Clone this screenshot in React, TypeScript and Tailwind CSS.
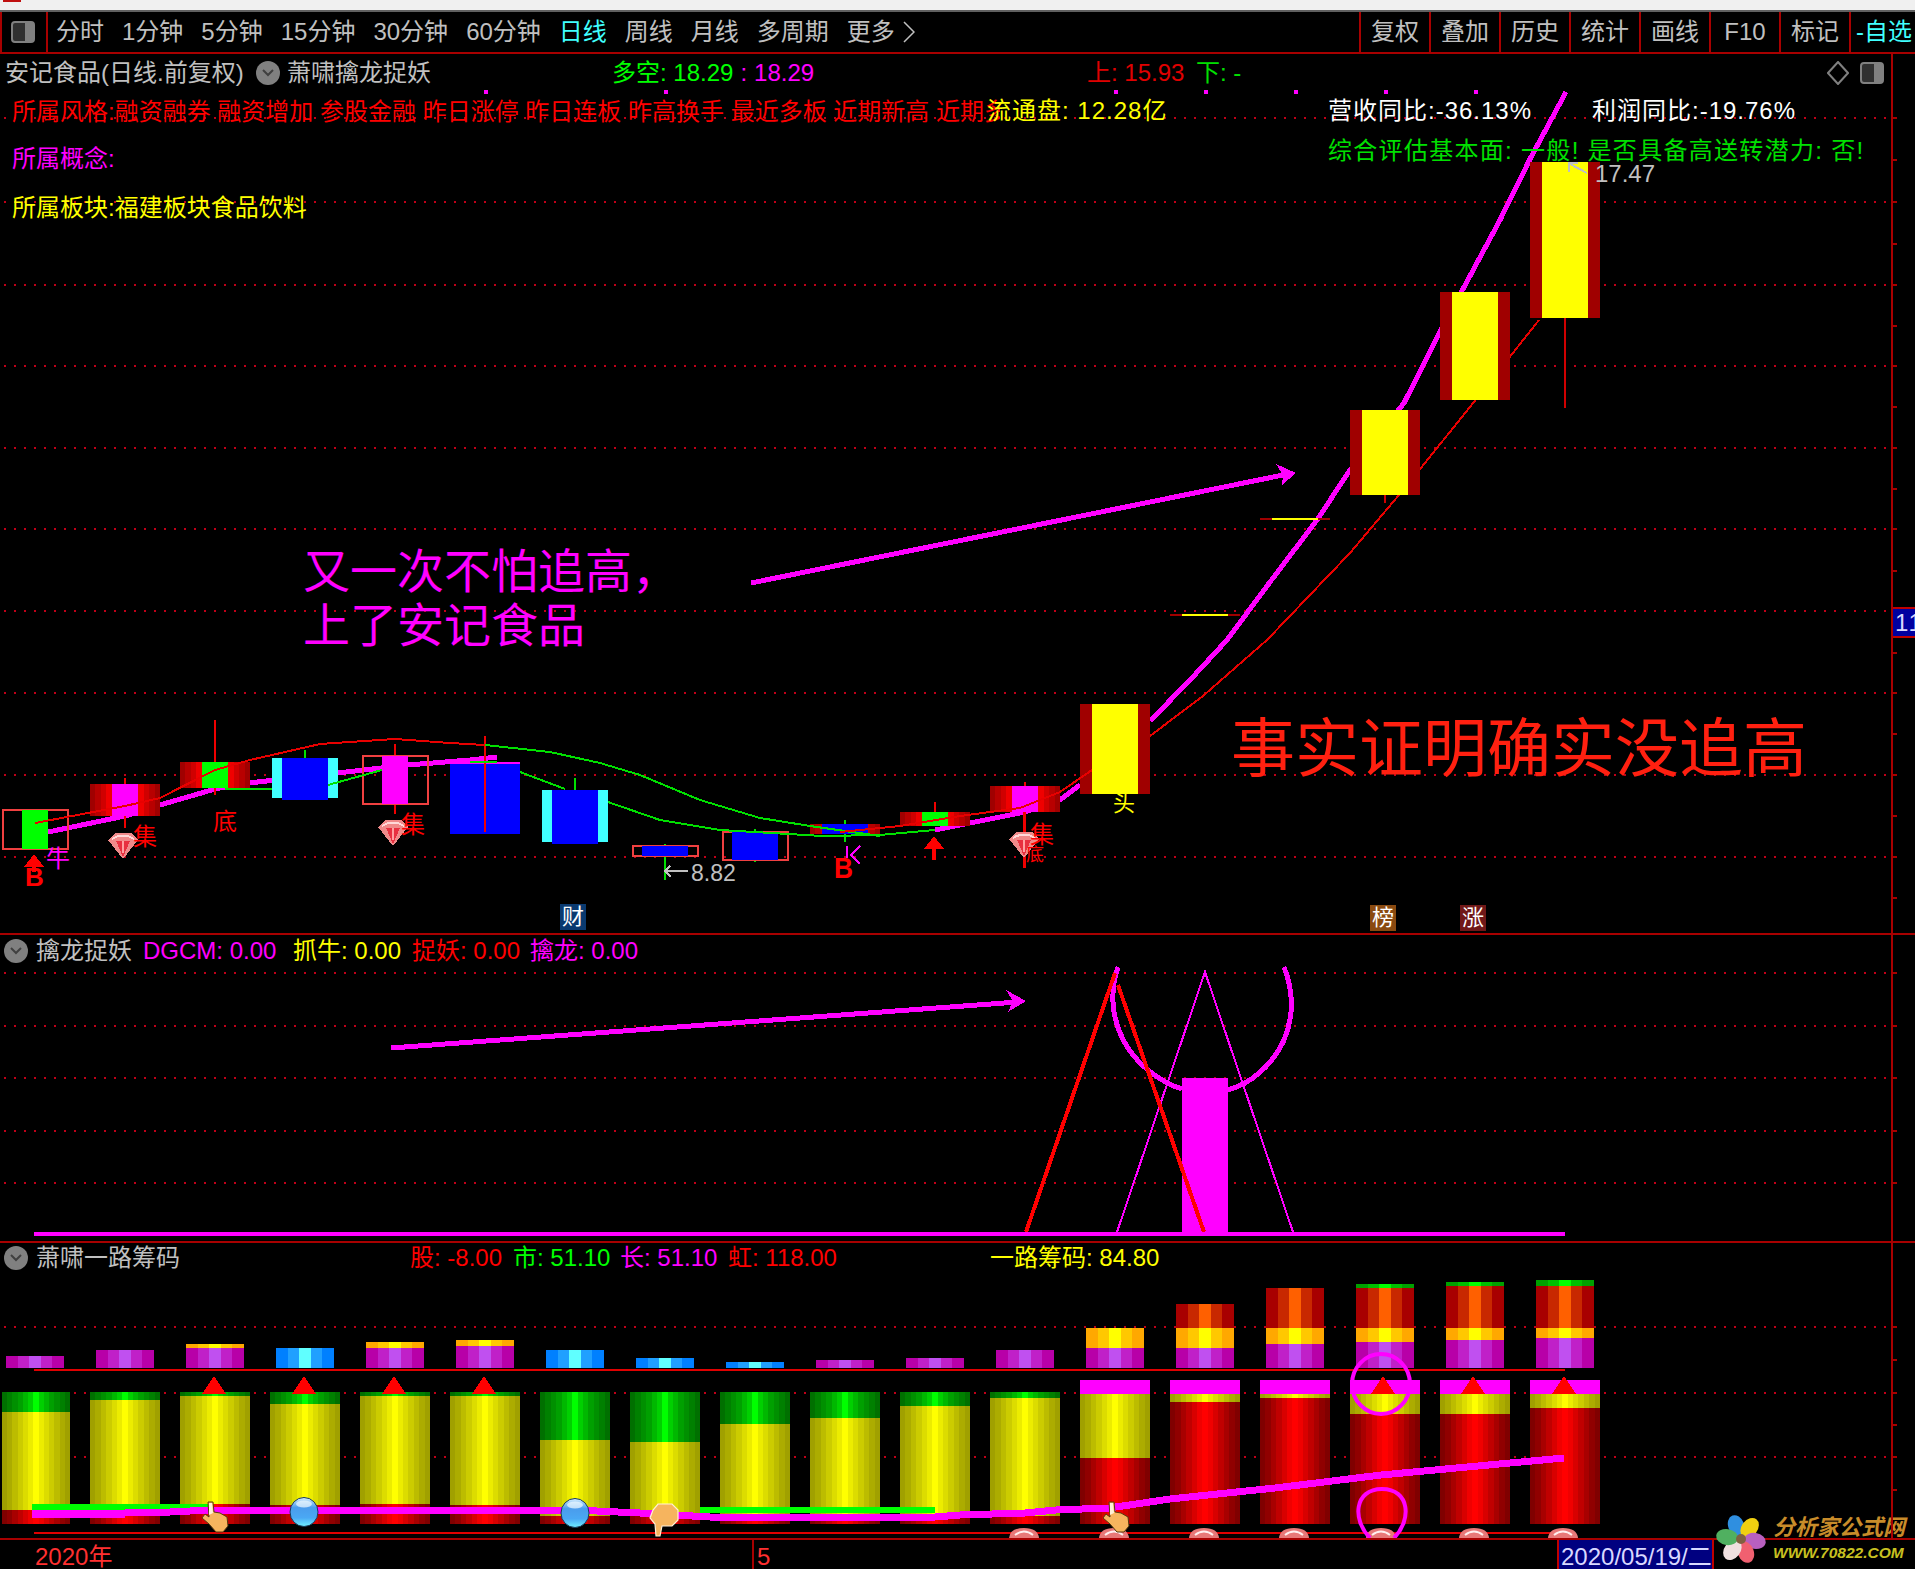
import React from "react";

const FONT = "font-['Liberation_Sans','Noto_Sans_CJK_SC',sans-serif]";
const AXIS_RED = "#a80000";
const DOT_RED = "#c00018";
const MAGENTA = "#ff00ff";

const mirror = (c: string[]) => [...c, ...c.slice(0, -1).reverse()];

const GRADIENTS: Record<string, string[]> = {
  candleRed: mirror(["#a00000", "#b80000", "#d00000", "#f00000", "#ff0000", "#ff0000", "#ff0000"]),
  yellow: mirror(["#a0a000", "#acac00", "#bcbc00", "#cccc00", "#dcdc00", "#ecec00", "#ffff00"]),
  green: mirror(["#007000", "#008000", "#009000", "#00a000", "#00b800", "#00d000", "#00ff00"]),
  red: mirror(["#800000", "#900000", "#a80000", "#c00000", "#d80000", "#f00000", "#ff0000"]),
  purple: mirror(["#b800a8", "#c020c8", "#c050f0"]),
  blue: mirror(["#0080ff", "#20a0ff", "#60ffff"]),
  orange: mirror(["#ffa800", "#ffc800", "#ffff00"]),
  ember: mirror(["#a80000", "#c82800", "#ff6000"]),
  capGreen: mirror(["#00a000", "#00c000", "#00ff00"]),
};

function Defs() {
  return (
    <defs>
      {Object.entries(GRADIENTS).map(([id, cols]) => (
        <linearGradient key={id} id={id} x1="0" x2="1" y1="0" y2="0">
          {cols.flatMap((c, i) => [
            <stop key={i + "a"} offset={i / cols.length} stopColor={c} />,
            <stop key={i + "b"} offset={(i + 1) / cols.length} stopColor={c} />,
          ])}
        </linearGradient>
      ))}
      <linearGradient id="ball" x1="0" x2="0" y1="0" y2="1">
        <stop offset="0" stopColor="#d8f0ff" />
        <stop offset="0.35" stopColor="#4a9cec" />
        <stop offset="0.7" stopColor="#4aa8f4" />
        <stop offset="1" stopColor="#70f0ff" />
      </linearGradient>
    </defs>
  );
}

function Grid({ ys }: { ys: number[] }) {
  return (
    <g>
      {ys.map((y) => (
        <line key={y} x1="4" x2="1890" y1={y} y2={y} stroke={DOT_RED} strokeWidth="2" strokeDasharray="2 8" />
      ))}
    </g>
  );
}

function AxisTicks({ ys }: { ys: number[] }) {
  return (
    <g>
      {ys.map((y) => (
        <line key={y} x1="1891" x2="1897" y1={y} y2={y} stroke={AXIS_RED} strokeWidth="2" />
      ))}
    </g>
  );
}

function Gem({ cx, y }: { cx: number; y: number }) {
  return (
    <g>
      <polygon points={`${cx - 15},${y + 7} ${cx - 8},${y} ${cx + 8},${y} ${cx + 15},${y + 7} ${cx},${y + 26}`} fill="#f08a8a" />
      <path d={`M${cx - 11} ${y + 6} Q${cx} ${y - 1} ${cx + 11} ${y + 6}`} fill="none" stroke="#ffd8d8" strokeWidth="2" />
      <polygon points={`${cx - 7},${y + 8} ${cx + 7},${y + 8} ${cx},${y + 24}`} fill="#e83040" />
      <line x1={cx} x2={cx} y1={y + 8} y2={y + 20} stroke="#ffa0a0" strokeWidth="2" />
    </g>
  );
}

function UpArrow({ x, top, bottom }: { x: number; top: number; bottom: number }) {
  return (
    <g fill="#ff0000">
      <polygon points={`${x},${top} ${x + 10},${top + 13} ${x - 10},${top + 13}`} />
      <rect x={x - 2} y={top + 12} width="4" height={bottom - top - 12} />
    </g>
  );
}

function Hand({ x, y }: { x: number; y: number }) {
  return (
    <g transform={`translate(${x} ${y})`} shapeRendering="auto">
      <path
        d="M0 0 L5 0 L6 10 L12 11 L19 15 L20 24 L15 30 L8 30 L1 22 L-6 16 L-3 12 L1 15 Z"
        fill="#f6b45e"
        stroke="#54380f"
        strokeWidth="1"
      />
      <path d="M1 1 L4 1 L5 11 L1 13 Z" fill="#fff0d8" />
    </g>
  );
}

function Fist({ x, y }: { x: number; y: number }) {
  return (
    <g transform={`translate(${x} ${y})`} shapeRendering="auto">
      <path
        d="M8 0 L22 0 L28 6 L28 16 L22 22 L12 22 L10 32 L6 32 L5 20 L0 14 L3 6 Z"
        fill="#f6b45e"
        stroke="#fff0d8"
        strokeWidth="1.2"
      />
    </g>
  );
}

function Ball({ cx, cy }: { cx: number; cy: number }) {
  return (
    <g shapeRendering="auto">
      <ellipse cx={cx} cy={cy} rx="14" ry="14.5" fill="url(#ball)" stroke="#183858" strokeWidth="1" />
      <ellipse cx={cx} cy={cy - 8} rx="8" ry="3.5" fill="#f0faff" opacity="0.7" />
    </g>
  );
}

function PinkCap({ cx }: { cx: number }) {
  return (
    <g shapeRendering="auto">
      <path d={`M${cx - 15} 1538 Q${cx - 14} 1528 ${cx} 1528 Q${cx + 14} 1528 ${cx + 15} 1538 Z`} fill="#e87878" />
      <path d={`M${cx - 9} 1535 Q${cx} 1528 ${cx + 9} 1535`} fill="none" stroke="#fff0f0" strokeWidth="2" />
    </g>
  );
}

type Candle = { x: number; top: number; bottom: number; wick?: [number, number, string]; side?: string; core: string; outline?: boolean };

const CANDLES: Candle[] = [
  { x: 0, top: 810, bottom: 849, core: "#00ff00", outline: true },
  { x: 90, top: 784, bottom: 816, core: MAGENTA, side: "url(#candleRed)", wick: [778, 828, "#f00000"] },
  { x: 180, top: 762, bottom: 788, core: "#00ff00", side: "url(#candleRed)", wick: [720, 795, "#f00000"] },
  { x: 270, top: 758, bottom: 800, core: "#0000ff", side: "#40ffff", wick: [750, 758, "#00e000"] },
  { x: 360, top: 756, bottom: 804, core: MAGENTA, outline: true, wick: [744, 814, "#f00000"] },
  { x: 630, top: 846, bottom: 856, core: "#0000ff", outline: true, wick: [844, 880, "#00e000"] },
  { x: 720, top: 832, bottom: 860, core: "#0000ff", outline: true, wick: [829, 862, "#00e000"] },
  { x: 810, top: 824, bottom: 834, core: "#0000ff", side: "url(#candleRed)", wick: [820, 842, "#00e000"] },
  { x: 900, top: 812, bottom: 826, core: "#00ff00", side: "url(#candleRed)", wick: [802, 812, "#f00000"] },
  { x: 990, top: 786, bottom: 812, core: MAGENTA, side: "url(#candleRed)", wick: [782, 825, "#f00000"] },
  { x: 1080, top: 704, bottom: 794, core: "#ffff00", side: "#a00000" },
  { x: 1350, top: 410, bottom: 495, core: "#ffff00", side: "#a00000", wick: [495, 503, "#d00000"] },
  { x: 1440, top: 292, bottom: 400, core: "#ffff00", side: "#a00000" },
  { x: 1530, top: 162, bottom: 318, core: "#ffff00", side: "#a00000", wick: [318, 408, "#d00000"] },
];

function CandleMark({ c }: { c: Candle }) {
  const center = c.x + 35;
  const blueBody = c.core === "#0000ff";
  const yellowBody = c.core === "#ffff00";
  const halfWidth = blueBody || yellowBody ? 23 : 13;
  const cyanSide = c.side === "#40ffff";
  return (
    <g>
      {c.wick && <line x1={center} x2={center} y1={c.wick[0]} y2={c.wick[1]} stroke={c.wick[2]} strokeWidth="2" />}
      {c.side && <rect x={c.x + (cyanSide ? 2 : 0)} y={c.top} width={cyanSide ? 66 : 70} height={cyanSide ? c.bottom - c.top - 2 : c.bottom - c.top} fill={c.side} />}
      {c.outline && <rect x={c.x + 3} y={c.top} width="65" height={c.bottom - c.top} fill="none" stroke="#f04040" strokeWidth="2" />}
      <rect x={center - halfWidth} y={c.top} width={halfWidth * 2} height={c.bottom - c.top} fill={c.core} />
    </g>
  );
}

function MainChart() {
  return (
    <svg className="absolute inset-0 w-full h-full" viewBox="0 54 1915 879" shapeRendering="crispEdges">
      <Defs />
      <Grid ys={[118, 202, 285, 366, 448, 529, 611, 693, 775, 857]} />
      <AxisTicks ys={[118, 160, 202, 244, 285, 326, 366, 407, 448, 489, 529, 571, 653, 693, 734, 775, 816, 857, 898]} />
      {[484, 664, 1114, 1204, 1294, 1384, 1474].map((x) => (
        <rect key={x} x={x} y="90" width="4" height="4" fill={MAGENTA} />
      ))}

      {/* thick trend line sits behind the candles */}
      <polyline
        points="48,832 125,816 160,805 215,789 240,784 408,765 470,760 497,757"
        fill="none"
        stroke={MAGENTA}
        strokeWidth="5"
      />
      <polyline points="935,830 1025,812 1060,800 1080,785" fill="none" stroke={MAGENTA} strokeWidth="5" />
      <polyline
        points="1150,721 1190,680 1227,640 1270,582 1317,520 1350,470 1404,403 1441,330 1500,220 1530,159 1566,92"
        fill="none"
        stroke={MAGENTA}
        strokeWidth="5"
      />
      <polyline points="1138,745 1203,696 1267,640 1350,553 1404,489 1478,397 1539,320" fill="none" stroke="#e80000" strokeWidth="2" />

      <rect x="450" y="762" width="70" height="2" fill={MAGENTA} />
      <rect x="450" y="764" width="70" height="70" fill="#0000ff" />
      <rect x="542" y="790" width="66" height="52" fill="#40ffff" />
      <rect x="552" y="790" width="46" height="54" fill="#0000ff" />
      <line x1="575" x2="575" y1="778" y2="790" stroke="#00e000" strokeWidth="2" />
      {CANDLES.map((c) => (
        <CandleMark key={c.x} c={c} />
      ))}
      <line x1="485" x2="485" y1="736" y2="832" stroke="#f00000" strokeWidth="2" />

      {/* thin averages over the low candles */}
      <polyline
        points="35,823 125,806 160,798 215,770 250,760 320,744 395,739 450,743 485,745"
        fill="none"
        stroke="#e80000"
        strokeWidth="2"
      />
      <polyline
        points="485,745 550,752 600,763 640,775 700,800 760,818 810,826 880,836"
        fill="none"
        stroke="#00e000"
        strokeWidth="2"
      />
      <polyline points="225,789 272,789" fill="none" stroke="#00e000" strokeWidth="2" />
      <polyline points="328,785 382,770" fill="none" stroke="#00e000" strokeWidth="2" />
      <polyline points="470,762 497,762" fill="none" stroke="#00e000" strokeWidth="2" />
      <polyline points="520,772 565,789" fill="none" stroke="#00e000" strokeWidth="2" />
      <polyline
        points="608,802 660,820 720,830 788,834 822,836 880,835 935,830"
        fill="none"
        stroke="#00e000"
        strokeWidth="2"
      />
      <polyline points="840,832 900,826 960,816 1020,808 1060,792 1092,770" fill="none" stroke="#e80000" strokeWidth="2" />

      {/* limit-up days */}
      <rect x="1170" y="614" width="70" height="2" fill="#a00000" />
      <rect x="1182" y="614" width="46" height="2" fill="#ffff00" />
      <rect x="1260" y="518" width="70" height="2" fill="#a00000" />
      <rect x="1272" y="518" width="46" height="2" fill="#ffff00" />

      {/* hand-drawn arrow */}
      <line x1="751" y1="583" x2="1288" y2="474" stroke={MAGENTA} strokeWidth="5" />
      <polygon points="1296,473 1276,464 1283,475 1282,485" fill={MAGENTA} />

      {/* markers */}
      <Gem cx={123} y={833} />
      <Gem cx={393} y={820} />
      <line x1="1024" x2="1024" y1="812" y2="868" stroke="#f00000" strokeWidth="3" />
      <Gem cx={1024} y={832} />
      <UpArrow x={34} top={854} bottom={872} />
      <UpArrow x={934} top={836} bottom={860} />
      <g fill="#ff0000" fontSize="24">
        <text x="133" y="845">集</text>
        <text x="213" y="830">底</text>
        <text x="401" y="833">集</text>
        <text x="1030" y="843">集</text>
        <text x="1026" y="861" fontSize="18">底</text>
        <text x="25" y="886" fontSize="26" fontWeight="700">B</text>
        <text x="834" y="878" fontSize="30" fontWeight="700" textLength="19" lengthAdjust="spacingAndGlyphs">B</text>
      </g>
      <text x="46" y="867" fontSize="24" fill={MAGENTA}>牛</text>
      <polyline points="860,846 851,855 860,864" fill="none" stroke={MAGENTA} strokeWidth="2" />
      <line x1="847" x2="847" y1="846" y2="858" stroke={MAGENTA} strokeWidth="2" />
      <text x="1113" y="811" fontSize="22" fill="#ffff00">头</text>

      {/* extreme price labels */}
      <g stroke="#c0c0c0" strokeWidth="2" fill="none">
        <polyline points="688,871 665,871" />
        <polyline points="670,866 665,871 671,877" />
        <polyline points="1587,173 1570,164" />
        <polyline points="1569,172 1569,163 1578,163" />
      </g>
      <text x="691" y="881" fontSize="23" fill="#c0c0c0">8.82</text>
      <text x="1595" y="182" fontSize="24" fill="#c0c0c0">17.47</text>
    </svg>
  );
}

function DragonChart() {
  return (
    <svg className="absolute inset-0 w-full h-full" viewBox="0 935 1915 306" shapeRendering="crispEdges">
      <Grid ys={[973, 1026, 1078, 1131, 1183]} />
      <AxisTicks ys={[973, 1026, 1078, 1131, 1183]} />
      <line x1="391" y1="1048" x2="1018" y2="1002" stroke={MAGENTA} strokeWidth="5" />
      <polygon points="1026,1001 1006,990 1013,1001 1008,1012" fill={MAGENTA} />
      <polyline points="1117,1232 1205,972 1293,1232" fill="none" stroke={MAGENTA} strokeWidth="2" />
      <rect x="1182" y="1078" width="46" height="154" fill={MAGENTA} />
      <path
        d="M1118 967 C1110 990 1110 1020 1128 1048 C1140 1066 1160 1082 1182 1089 M1228 1090 C1250 1084 1272 1066 1284 1040 C1294 1016 1293 990 1284 967"
        fill="none"
        stroke={MAGENTA}
        strokeWidth="5"
      />
      <polyline points="1026,1232 1115,973" fill="none" stroke="#ff0000" strokeWidth="4" />
      <polyline points="1118,985 1204,1232" fill="none" stroke="#ff0000" strokeWidth="4" />
      <rect x="34" y="1232" width="1531" height="4" fill={MAGENTA} />
    </svg>
  );
}

type Stack = { kind: "purple" | "blue"; top: number; orange?: number; ember?: number; green?: number };

const STACKS: Stack[] = [
  { kind: "purple", top: 1356 },
  { kind: "purple", top: 1350 },
  { kind: "purple", top: 1348, orange: 1344 },
  { kind: "blue", top: 1348 },
  { kind: "purple", top: 1348, orange: 1342 },
  { kind: "purple", top: 1346, orange: 1340 },
  { kind: "blue", top: 1350 },
  { kind: "blue", top: 1358 },
  { kind: "blue", top: 1362 },
  { kind: "purple", top: 1360 },
  { kind: "purple", top: 1358 },
  { kind: "purple", top: 1350 },
  { kind: "purple", top: 1348, orange: 1328 },
  { kind: "purple", top: 1348, orange: 1328, ember: 1304 },
  { kind: "purple", top: 1344, orange: 1328, ember: 1288 },
  { kind: "purple", top: 1342, orange: 1328, ember: 1288, green: 1284 },
  { kind: "purple", top: 1340, orange: 1328, ember: 1286, green: 1282 },
  { kind: "purple", top: 1338, orange: 1328, ember: 1286, green: 1280 },
];

// [top of the yellow, top of the red]
const COLUMNS: [number, number][] = [
  [1412, 1510], [1400, 1510], [1396, 1504], [1404, 1505], [1396, 1504], [1396, 1505],
  [1440, 1516], [1442, 1516], [1424, 1516], [1418, 1516], [1406, 1516], [1398, 1516],
  [1394, 1458], [1394, 1402], [1394, 1398], [1394, 1414], [1394, 1414], [1394, 1408],
];

function ChipChart() {
  return (
    <svg className="absolute inset-0 w-full h-full" viewBox="0 1243 1915 295" shapeRendering="crispEdges">
      <Grid ys={[1327, 1393, 1457]} />
      <AxisTicks ys={[1327, 1360, 1393, 1425, 1457, 1490]} />

      {STACKS.map((s, i) => {
        const x = 6 + 90 * i;
        return (
          <g key={i}>
            <rect x={x} y={s.top} width="58" height={1368 - s.top} fill={`url(#${s.kind})`} />
            {s.orange && <rect x={x} y={s.orange} width="58" height={s.top - s.orange} fill="url(#orange)" />}
            {s.ember && s.orange && <rect x={x} y={s.ember} width="58" height={s.orange - s.ember} fill="url(#ember)" />}
            {s.green && s.ember && <rect x={x} y={s.green} width="58" height={s.ember - s.green} fill="url(#capGreen)" />}
          </g>
        );
      })}
      <rect x="34" y="1369" width="1531" height="2" fill="#e00000" />

      {COLUMNS.map(([yellow, red], i) => {
        const x = i === 0 ? 2 : 90 * i;
        const w = i === 0 ? 68 : 70;
        return (
          <g key={i}>
            {i < 12 ? (
              <rect x={x} y="1392" width={w} height={yellow - 1392} fill="url(#green)" />
            ) : (
              <rect x={x} y="1380" width={w} height="14" fill={MAGENTA} />
            )}
            <rect x={x} y={yellow} width={w} height={red - yellow} fill="url(#yellow)" />
            <rect x={x} y={red} width={w} height={1524 - red} fill="url(#red)" />
          </g>
        );
      })}

      {[214, 304, 394, 484, 1383, 1473, 1564].map((x) => (
        <polygon key={x} points={`${x},1376 ${x + 12},1394 ${x - 12},1394`} fill="#ff0000" />
      ))}

      {/* bottom trend lines */}
      <polyline points="32,1507 125,1507 170,1507 210,1507" fill="none" stroke="#00ff00" strokeWidth="6" />
      <polyline points="700,1510 935,1510" fill="none" stroke="#00ff00" strokeWidth="6" />
      <rect x="1068" y="1506" width="16" height="2" fill="#00ff00" />
      <polyline points="32,1514 125,1514" fill="none" stroke={MAGENTA} strokeWidth="8" />
      <polyline points="125,1512 170,1512 210,1510 575,1510 640,1513 710,1517 935,1517 960,1515 1025,1513 1056,1510 1109,1508 1170,1499 1275,1488 1381,1475 1564,1458" fill="none" stroke={MAGENTA} strokeWidth="7" />

      <rect x="34" y="1532" width="1531" height="2" fill="#e00000" />
      {[1024, 1114, 1204, 1294, 1381, 1474, 1563].map((x) => (
        <PinkCap key={x} cx={x} />
      ))}

      <Hand x={208} y={1502} />
      <Hand x={1109} y={1502} />
      <Fist x={650} y={1504} />
      <Ball cx={304} cy={1512} />
      <Ball cx={575} cy={1513} />

      <g shapeRendering="auto" fill="none" stroke={MAGENTA} strokeWidth="4">
        <ellipse cx="1381" cy="1384" rx="29" ry="30" />
        <path d="M1370 1538 C1352 1520 1354 1489 1382 1489 C1410 1489 1412 1520 1394 1538" />
      </g>
    </svg>
  );
}

function FoldBadge() {
  return (
    <div className="w-6 h-6 rounded-full bg-[#808080] flex items-center justify-center">
      <svg width="12" height="8" viewBox="0 0 12 8">
        <polyline points="1,1 6,6 11,1" fill="none" stroke="#404040" strokeWidth="2" />
      </svg>
    </div>
  );
}

function PaneToggle() {
  return (
    <div className="w-[24px] h-[22px] rounded-[4px] border-2 border-[#808080] bg-[#303030] flex justify-end">
      <div className="w-[8px] h-full bg-[#808080]" />
    </div>
  );
}

function Toolbar() {
  const left: [string, string][] = [
    ["分时", "text-[#c0c0c0]"],
    ["1分钟", "text-[#c0c0c0]"],
    ["5分钟", "text-[#c0c0c0]"],
    ["15分钟", "text-[#c0c0c0]"],
    ["30分钟", "text-[#c0c0c0]"],
    ["60分钟", "text-[#c0c0c0]"],
    ["日线", "text-[#40ffff]"],
    ["周线", "text-[#c0c0c0]"],
    ["月线", "text-[#c0c0c0]"],
    ["多周期", "text-[#c0c0c0]"],
  ];
  const right = ["复权", "叠加", "历史", "统计", "画线", "F10", "标记"];
  return (
    <div className="h-[42px] shrink-0 flex border-b-2 border-[#a80000] text-[24px] leading-none">
      <div className="w-[48px] shrink-0 flex items-center justify-center border-x-2 border-[#a80000] pr-[2px]">
        <PaneToggle />
      </div>
      <div className="flex items-center gap-[18px] pl-[8px]">
        {left.map(([label, color]) => (
          <span key={label} className={color}>{label}</span>
        ))}
        <span className="flex items-center gap-[8px] text-[#c0c0c0]">
          更多
          <svg width="12" height="22" viewBox="0 0 12 22">
            <polyline points="1,1 11,11 1,21" fill="none" stroke="#c0c0c0" strokeWidth="1.5" />
          </svg>
        </span>
      </div>
      <div className="ml-auto flex">
        {right.map((label) => (
          <div key={label} className="w-[70px] flex items-center justify-center border-l-2 border-[#a80000] text-[#c0c0c0]">
            {label}
          </div>
        ))}
        <div className="w-[66px] flex items-center border-l-2 border-[#a80000] text-[#40ffff] whitespace-nowrap overflow-hidden pl-[5px]">
          -自选
        </div>
      </div>
    </div>
  );
}

function MainPanel() {
  return (
    <div className="relative h-[879px] shrink-0 text-[24px] leading-none whitespace-nowrap">
      <MainChart />
      <div className="relative">
        <div className="flex items-center h-[37px]">
          <span className="w-[256px] shrink-0 pl-[5px] text-[#c0c0c0]">安记食品(日线.前复权)</span>
          <div className="w-[31px] shrink-0"><FoldBadge /></div>
          <span className="w-[325px] shrink-0 text-[#c0c0c0]">萧啸擒龙捉妖</span>
          <span className="w-[475px] shrink-0">
            <span className="text-[#00ff00]">多空: 18.29</span>
            <span className="text-[#ff00ff] ml-[7px]">:</span>
            <span className="text-[#ff00ff] ml-[7px]">18.29</span>
          </span>
          <span className="w-[109px] shrink-0 text-[#e00000]">上: 15.93</span>
          <span className="w-[631px] shrink-0 text-[#00e000]">下: -</span>
          <svg className="w-[22px] shrink-0" width="22" height="24" viewBox="0 0 22 24">
            <polygon points="11,1 21,12 11,23 1,12" fill="none" stroke="#808080" strokeWidth="2" />
          </svg>
          <div className="ml-[11px]"><PaneToggle /></div>
        </div>
        <div className="flex">
          <div className="w-[1000px] shrink-0 overflow-hidden pl-[12px] flex flex-col">
            <span className="h-[37px] flex items-center text-[#ff0000] mt-[2px]">
              所属风格:融资融券 融资增加 参股金融 昨日涨停 昨日连板 昨高换手 最近多板 近期新高 近期多板
            </span>
            <span className="h-[24px] mt-[17px] flex items-center text-[#ff00ff]">所属概念:</span>
            <span className="h-[24px] mt-[25px] flex items-center text-[#ffff00]">所属板块:福建板块食品饮料</span>
          </div>
          <span className="w-[341px] shrink-0 -ml-[13px] h-[37px] mt-[1px] flex items-center text-[#ffff00] tracking-[1px]">流通盘: 12.28亿</span>
          <div className="flex flex-col">
            <div className="flex h-[37px] items-center mt-[1px] text-[#ffffff] tracking-[1px]">
              <span className="w-[264px] shrink-0">营收同比:-36.13%</span>
              <span>利润同比:-19.76%</span>
            </div>
            <span className="h-[24px] mt-[10px] flex items-center text-[#00e000] tracking-[1.3px]">综合评估基本面: 一般! 是否具备高送转潜力: 否!</span>
          </div>
        </div>
      </div>
      <div className="absolute right-0 top-[553px] w-[24px] h-[31px] border-y-2 border-[#c00000] bg-[#0000a0] text-[#d8d8ff] flex items-center pl-[4px] overflow-hidden tracking-[2px]">
        11
      </div>
      <div className="absolute left-[560px] top-[850px] w-[26px] h-[26px] bg-[#0a3a70] text-white text-[22px] flex items-center justify-center">财</div>
      <div className="absolute left-[1370px] top-[851px] w-[26px] h-[26px] bg-[#8a4a10] text-white text-[22px] flex items-center justify-center">榜</div>
      <div className="absolute left-[1460px] top-[851px] w-[26px] h-[26px] bg-[#701818] text-white text-[22px] flex items-center justify-center">涨</div>
      <div className="absolute left-[303px] top-[491px] text-[47px] leading-[54px] text-[#ff00ff]">
        <div>又一次不怕追高，</div>
        <div>上了安记食品</div>
      </div>
      <div className="absolute left-[1231px] top-[663px] text-[64px] leading-none text-[#ff2010]">事实证明确实没追高</div>
    </div>
  );
}

function DragonPanel() {
  return (
    <div className="relative h-[308px] shrink-0 border-t-2 border-[#a80000] text-[24px] leading-none whitespace-nowrap">
      <DragonChart />
      <div className="relative flex items-center h-[32px]">
        <div className="w-[36px] shrink-0 pl-[4px]"><FoldBadge /></div>
        <span className="w-[107px] shrink-0 text-[#c0c0c0]">擒龙捉妖</span>
        <span className="w-[150px] shrink-0 text-[#ff00ff]">DGCM: 0.00</span>
        <span className="w-[119px] shrink-0 text-[#ffff00]">抓牛: 0.00</span>
        <span className="w-[118px] shrink-0 text-[#ff0000]">捉妖: 0.00</span>
        <span className="text-[#ff00ff]">擒龙: 0.00</span>
      </div>
    </div>
  );
}

function ChipPanel() {
  return (
    <div className="relative h-[297px] shrink-0 border-t-2 border-[#a80000] text-[24px] leading-none whitespace-nowrap">
      <ChipChart />
      <div className="relative flex items-center h-[30px]">
        <div className="w-[36px] shrink-0 pl-[4px]"><FoldBadge /></div>
        <span className="w-[374px] shrink-0 text-[#c0c0c0]">萧啸一路筹码</span>
        <span className="w-[103px] shrink-0 text-[#ff0000]">股: -8.00</span>
        <span className="w-[107px] shrink-0 text-[#00ff00]">市: 51.10</span>
        <span className="w-[108px] shrink-0 text-[#ff00ff]">长: 51.10</span>
        <span className="w-[262px] shrink-0 text-[#ff0000]">虹: 118.00</span>
        <span className="text-[#ffff00]">一路筹码: 84.80</span>
      </div>
    </div>
  );
}

function Logo() {
  const petals = [
    ["#2f8fe0", 0],
    ["#f0d010", 58],
    ["#b860c0", 118],
    ["#f06070", 180],
    ["#f0e0e0", 238],
    ["#50b060", 298],
  ] as const;
  return (
    <div className="absolute right-[10px] bottom-[5px] flex items-center gap-[6px]">
      <svg width="52" height="50" viewBox="-26 -25 52 50">
        {petals.map(([c, a]) => (
          <ellipse key={a} cx="0" cy="-14" rx="8" ry="11" fill={c} transform={`rotate(${a - 20})`} />
        ))}
        <circle r="5" fill="#806040" />
      </svg>
      <div className="w-[132px] flex flex-col items-start gap-[6px]">
        <span className="text-[22px] leading-none font-bold italic text-[#c88c2a]">分析家公式网</span>
        <span className="text-[15.5px] leading-none font-bold italic text-[#c8c020]">WWW.70822.COM</span>
      </div>
    </div>
  );
}

function TimeAxis() {
  return (
    <div className="relative flex-1 border-t-2 border-[#a80000] flex text-[24px] leading-none text-[#ff3030] whitespace-nowrap">
      <span className="w-[752px] shrink-0 pl-[35px] pt-[5px]">2020年</span>
      <span className="w-[805px] shrink-0 border-l-2 border-[#a80000] pl-[3px] pt-[5px]">5</span>
      <span className="w-[157px] shrink-0 bg-[#000080] border-x-2 border-[#c00000] text-[#d8d8ff] pl-[2px] pt-[5px]">2020/05/19/二</span>
      <Logo />
    </div>
  );
}

export default function App() {
  return (
    <div className={`w-[1915px] h-[1569px] flex flex-col bg-black overflow-hidden ${FONT}`}>
      <div className="relative h-[12px] shrink-0 bg-[#f0f0f0] border-b-2 border-[#606060]">
        <div className="absolute left-[3px] top-0 w-[18px] h-[2px] bg-[#c01010]" />
      </div>
      <Toolbar />
      <MainPanel />
      <DragonPanel />
      <ChipPanel />
      <TimeAxis />
      <div className="absolute left-[1891px] top-[54px] w-[2px] h-[1485px] bg-[#a80000]" />
    </div>
  );
}
